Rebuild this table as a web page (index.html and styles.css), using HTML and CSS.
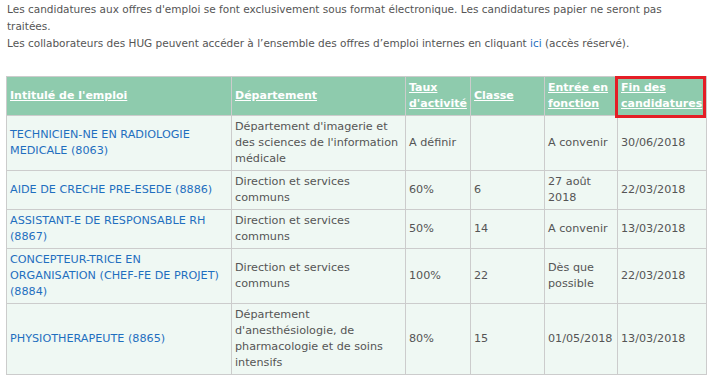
FILE: index.html
```html
<!DOCTYPE html>
<html lang="fr">
<head>
<meta charset="utf-8">
<link rel="stylesheet" href="styles.css">
</head>
<body>
<div class="page">
  <p class="intro">Les candidatures aux offres d'emploi se font exclusivement sous format électronique. Les candidatures papier ne seront pas traitées.<br>Les collaborateurs des HUG peuvent accéder à l’ensemble des offres d’emploi internes en cliquant <a href="#" class="link">ici</a> (accès réservé).</p>
  <table class="jobs">
    <colgroup>
      <col class="c1"><col class="c2"><col class="c3"><col class="c4"><col class="c5"><col class="c6">
    </colgroup>
    <thead>
      <tr>
        <th><a href="#">Intitulé de l'emploi</a></th>
        <th><a href="#">Département</a></th>
        <th><a href="#">Taux d'activité</a></th>
        <th><a href="#">Classe</a></th>
        <th><a href="#">Entrée en fonction</a></th>
        <th class="hl"><a href="#">Fin des candidatures</a></th>
      </tr>
    </thead>
    <tbody>
      <tr>
        <td><a href="#" class="link">TECHNICIEN-NE EN RADIOLOGIE MEDICALE (8063)</a></td>
        <td>Département d'imagerie et des sciences de l'information médicale</td>
        <td>A définir</td>
        <td></td>
        <td>A convenir</td>
        <td>30/06/2018</td>
      </tr>
      <tr>
        <td><a href="#" class="link">AIDE DE CRECHE PRE-ESEDE (8886)</a></td>
        <td>Direction et services communs</td>
        <td>60%</td>
        <td>6</td>
        <td>27 août 2018</td>
        <td>22/03/2018</td>
      </tr>
      <tr>
        <td><a href="#" class="link">ASSISTANT-E DE RESPONSABLE RH (8867)</a></td>
        <td>Direction et services communs</td>
        <td>50%</td>
        <td>14</td>
        <td>A convenir</td>
        <td>13/03/2018</td>
      </tr>
      <tr>
        <td><a href="#" class="link">CONCEPTEUR-TRICE EN ORGANISATION (CHEF-FE DE PROJET) (8884)</a></td>
        <td>Direction et services communs</td>
        <td>100%</td>
        <td>22</td>
        <td>Dès que possible</td>
        <td>22/03/2018</td>
      </tr>
      <tr>
        <td><a href="#" class="link">PHYSIOTHERAPEUTE (8865)</a></td>
        <td>Département d'anesthésiologie, de pharmacologie et de soins intensifs</td>
        <td>80%</td>
        <td>15</td>
        <td>01/05/2018</td>
        <td>13/03/2018</td>
      </tr>
    </tbody>
  </table>
</div>
</body>
</html>
```

FILE: styles.css
```css
html, body {
  margin: 0;
  padding: 0;
  background: #ffffff;
}
.page {
  padding: 1px 5px 0 6px;
  font-family: "DejaVu Sans", Verdana, sans-serif;
  font-size: 10.5px;
  color: #555555;
}
.intro {
  margin: 0 0 0 1px;
  line-height: 17px;
}
.link {
  color: #1f6fbf;
  text-decoration: none;
}
.jobs {
  margin-top: 24px;
  width: 700px;
  table-layout: fixed;
  border-collapse: collapse;
  border: 1px solid #cccccc;
  line-height: 16px;
  font-size: 11.2px;
}
.c1 { width: 225px; }
.c2 { width: 174px; }
.c3 { width: 65px; }
.c4 { width: 74px; }
.c5 { width: 73px; }
.c6 { width: 89px; }
.jobs th {
  background: #8ecbad;
  text-align: left;
  vertical-align: middle;
  padding: 3px 3px;
  height: 32px;
  border: 1px solid #cccccc;
  font-weight: bold;
  font-size: 11px;
}
.jobs th a {
  color: #ffffff;
  text-decoration: underline;
}
.jobs td {
  background: #eff8f3;
  border: 1px solid #cccccc;
  padding: 3px 3px;
  vertical-align: middle;
}
.hl {
  position: relative;
}
.hl::after {
  content: "";
  position: absolute;
  left: -3px;
  right: 0;
  top: -1px;
  bottom: -3px;
  border: 3px solid #e41e26;
  pointer-events: none;
}
```
